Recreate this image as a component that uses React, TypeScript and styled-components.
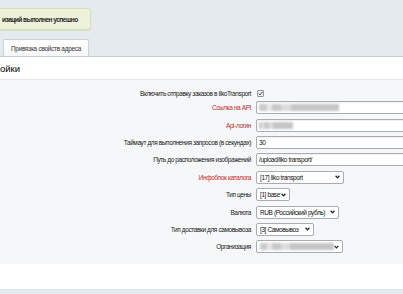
import React from "react";
import styled, { createGlobalStyle } from "styled-components";

const Global = createGlobalStyle`
  html, body { margin: 0; padding: 0; }
  body {
    background: #e4eaed;
    font-family: "Liberation Sans", Arial, sans-serif;
    color: #000;
    overflow: hidden;
  }
`;

const Page = styled.div`
  width: 403px;
  height: 294px;
  padding-top: 8px;
  box-sizing: border-box;
  overflow: hidden;
`;

const Message = styled.div`
  margin-left: -8px;
  width: 99px;
  height: 22px;
  box-sizing: border-box;
  background: #eef1d9;
  border: 1px solid #d7ddb9;
  border-radius: 3px;
  box-shadow: 0 1px 1px rgba(0, 0, 0, 0.06);
  display: flex;
  align-items: center;
  padding-left: 9px;
  font-size: 6.6px;
  letter-spacing: -0.55px;
  font-weight: bold;
  color: #2b2b2b;
  white-space: nowrap;
`;

const Tabs = styled.div`
  display: flex;
  margin-top: 9px;
  padding-left: 3px;
  height: 17px;
`;

const Tab = styled.div`
  width: 86px;
  box-sizing: border-box;
  border: 1px solid #cbd3d6;
  border-bottom: none;
  border-radius: 2px 2px 0 0;
  background: linear-gradient(#ffffff, #f6f8f9);
  display: flex;
  align-items: center;
  justify-content: center;
  font-size: 6.4px;
  letter-spacing: -0.25px;
  color: #333;
  white-space: nowrap;
`;

const Panel = styled.div`
  border-top: 1px solid #c3ccd0;
  background: #fff;
`;

const Heading = styled.div`
  height: 23px;
  box-sizing: border-box;
  border-bottom: 1px solid #e0e5e7;
  display: flex;
  align-items: center;
  font-size: 9.5px;
  color: #000;
`;

const Content = styled.div`
  background: #f5f7f8;
  padding: 7px 0 8px;
  display: grid;
  grid-template-columns: 256px 1fr;
  grid-template-rows: 12px;
  grid-auto-rows: 17.4px;
  font-size: 6.5px;
  letter-spacing: -0.4px;
`;

const Label = styled.div<{ $required?: boolean }>`
  display: flex;
  align-items: center;
  justify-content: flex-end;
  padding-right: 5px;
  white-space: nowrap;
  color: ${(p) => (p.$required ? "#b5312f" : "#1a1a1a")};
`;

const Value = styled.div`
  display: flex;
  align-items: center;
  white-space: nowrap;
`;

const Check = styled.span`
  width: 7px;
  height: 7px;
  margin-left: 1px;
  box-sizing: border-box;
  border: 1px solid #8f989d;
  border-radius: 1px;
  background: #eef0f1;
  display: flex;
  align-items: center;
  justify-content: center;
`;

const Input = styled.div`
  width: 200px;
  height: 13px;
  box-sizing: border-box;
  border: 1px solid #a6aeb2;
  border-radius: 2px;
  background: #fff;
  box-shadow: inset 0 1px 1px rgba(0, 0, 0, 0.06);
  display: flex;
  align-items: center;
  padding-left: 2px;
  color: #111;
`;

const Select = styled.div<{ $w: number }>`
  width: ${(p) => p.$w}px;
  height: 13px;
  box-sizing: border-box;
  border: 1px solid #a6aeb2;
  border-radius: 2px;
  background: #fff;
  display: flex;
  align-items: center;
  justify-content: space-between;
  padding: 0 3px 0 3px;
  color: #111;
`;

const Blur = styled.span<{ $w: number }>`
  display: block;
  width: ${(p) => p.$w}px;
  height: 7px;
  filter: blur(0.8px);
  background: linear-gradient(
    90deg,
    #cbcbcb 0 10%,
    #e6e6e6 10% 16%,
    #c8c8c8 16% 28%,
    #dcdcdc 28% 40%,
    #c6c6c6 40% 100%
  );
`;

const Footer = styled.div`
  height: 25px;
  background: #fff;
  border-bottom: 1px solid #dde4e7;
`;

const Chevron = () => (
  <svg width="5" height="4" viewBox="0 0 5 4">
    <path d="M0.6 0.8 L2.5 2.9 L4.4 0.8" fill="none" stroke="#222" strokeWidth="1.3" />
  </svg>
);

const Tick = () => (
  <svg width="5" height="5" viewBox="0 0 5 5">
    <path d="M0.7 2.6 L2 3.9 L4.4 0.9" fill="none" stroke="#333" strokeWidth="0.9" />
  </svg>
);

export default function App() {
  return (
    <>
      <Global />
      <Page>
        <Message>изаций выполнен успешно</Message>
        <Tabs>
          <Tab>Привязка свойств адреса</Tab>
        </Tabs>
        <Panel>
          <Heading>ойки</Heading>
          <Content>
            <Label>Включить отправку заказов в IikoTransport</Label>
            <Value>
              <Check>
                <Tick />
              </Check>
            </Value>

            <Label $required>Ссылка на API</Label>
            <Value>
              <Input>
                <Blur $w={80} />
              </Input>
            </Value>

            <Label $required>Api-логин</Label>
            <Value>
              <Input>
                <Blur $w={34} />
              </Input>
            </Value>

            <Label>Таймаут для выполнения запросов (в секундах)</Label>
            <Value>
              <Input>30</Input>
            </Value>

            <Label>Путь до расположения изображений</Label>
            <Value>
              <Input>/upload/iiko transport/</Input>
            </Value>

            <Label $required>Инфоблок каталога</Label>
            <Value>
              <Select $w={88}>
                <span>[17] Iiko transport</span>
                <Chevron />
              </Select>
            </Value>

            <Label>Тип цены</Label>
            <Value>
              <Select $w={34}>
                <span>[1] base</span>
                <Chevron />
              </Select>
            </Value>

            <Label>Валюта</Label>
            <Value>
              <Select $w={83}>
                <span>RUB (Российский рубль)</span>
                <Chevron />
              </Select>
            </Value>

            <Label>Тип доставки для самовывоза</Label>
            <Value>
              <Select $w={58}>
                <span>[3] Самовывоз</span>
                <Chevron />
              </Select>
            </Value>

            <Label>Организация</Label>
            <Value>
              <Select $w={87}>
                <Blur $w={76} />
                <Chevron />
              </Select>
            </Value>
          </Content>
          <Footer />
        </Panel>
      </Page>
    </>
  );
}
